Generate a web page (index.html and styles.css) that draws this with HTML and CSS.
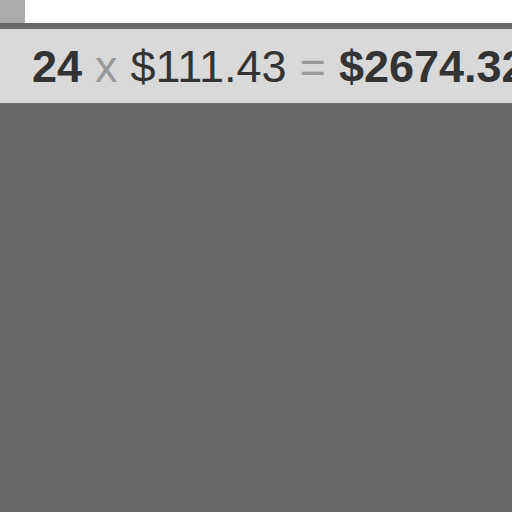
FILE: index.html
```html
<!DOCTYPE html>
<html>
<head>
<meta charset="utf-8">
<link rel="stylesheet" href="styles.css">
</head>
<body>
<div class="top">
  <div class="thumb"></div>
</div>
<div class="bar">
  <div class="calc"><b class="qty">24</b> <span class="op">x</span> <span class="price">$111.43</span> <span class="op">=</span> <b class="total">$2674.32</b></div>
</div>
</body>
</html>
```
FILE: styles.css
```css
html, body {
  margin: 0;
  padding: 0;
  background: #696969;
  width: 512px;
  height: 512px;
  overflow: hidden;
}
.top {
  height: 23px;
  background: #ffffff;
  display: flex;
}
.thumb {
  width: 25px;
  height: 23px;
  background: #ababab;
}
.bar {
  margin-top: 6px;
  height: 74px;
  background: #d9d9d9;
  display: flex;
  align-items: center;
  padding-left: 32px;
  overflow: hidden;
}
.calc {
  font-family: "Liberation Sans", Arial, sans-serif;
  font-size: 45px;
  color: #333333;
  white-space: nowrap;
  line-height: 1;
  word-spacing: 0.5px;
}
.op {
  color: #999999;
}
```
